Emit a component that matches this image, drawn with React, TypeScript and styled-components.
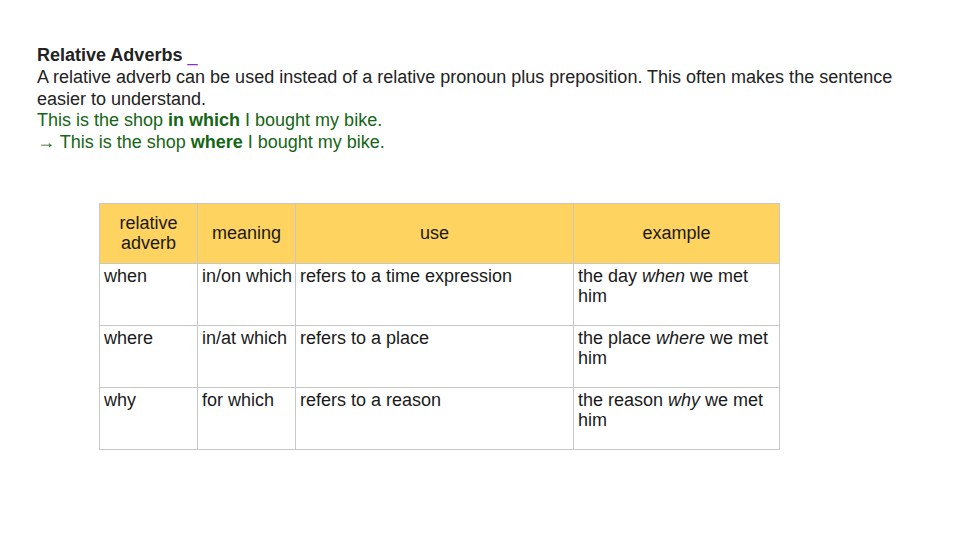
import React from "react";
import styled, { createGlobalStyle } from "styled-components";

const Global = createGlobalStyle`
  html, body { margin: 0; padding: 0; background: #ffffff; }
  body { font-family: "Liberation Sans", Arial, sans-serif; }
`;

const Page = styled.div`
  width: 960px;
  height: 540px;
  box-sizing: border-box;
  padding: 45px 37px 0 37px;
  display: flex;
  flex-direction: column;
  background: #fff;
`;

const Text = styled.div`
  font-size: 18px;
  line-height: 21.8px;
  color: #222;
  width: 880px;
`;

const Title = styled.span`
  font-weight: bold;
  color: #222;
`;

const Mark = styled.span`
  color: #8a2be2;
`;

const Green = styled.div`
  color: #156515;
`;

const TableWrap = styled.div`
  margin-top: 49px;
  margin-left: 62px;
`;

const Table = styled.table`
  border-collapse: collapse;
  font-size: 18px;
  color: #1a1a1a;
  table-layout: fixed;
  width: 680px;
`;

const Th = styled.th<{ $w: number }>`
  width: ${(p) => p.$w}px;
  height: 60px;
  background: #ffd35f;
  border: 1px solid #c8c8c8;
  font-weight: normal;
  text-align: center;
  vertical-align: middle;
  line-height: 20px;
  padding: 0 4px;
  box-sizing: border-box;
`;

const Td = styled.td`
  height: 62px;
  border: 1px solid #c8c8c8;
  vertical-align: top;
  text-align: left;
  padding: 2px 1px 0 4px;
  line-height: 20px;
  box-sizing: border-box;
`;

const rows = [
  ["when", "in/on which", "refers to a time expression", "the day ", "when"],
  ["where", "in/at which", "refers to a place", "the place ", "where"],
  ["why", "for which", "refers to a reason", "the reason ", "why"],
];

export default function App() {
  return (
    <>
      <Global />
      <Page>
        <Text>
          <div>
            <Title>Relative Adverbs</Title> <Mark>_</Mark>
          </div>
          <div>
            A relative adverb can be used instead of a relative pronoun plus preposition. This often makes the sentence
            easier to understand.
          </div>
          <Green>
            This is the shop <b>in which</b> I bought my bike.
          </Green>
          <Green>
            → This is the shop <b>where</b> I bought my bike.
          </Green>
        </Text>
        <TableWrap>
          <Table>
            <thead>
              <tr>
                <Th $w={98}>
                  relative
                  <br />
                  adverb
                </Th>
                <Th $w={98}>meaning</Th>
                <Th $w={278}>use</Th>
                <Th $w={206}>example</Th>
              </tr>
            </thead>
            <tbody>
              {rows.map((r) => (
                <tr key={r[0]}>
                  <Td>{r[0]}</Td>
                  <Td>{r[1]}</Td>
                  <Td>{r[2]}</Td>
                  <Td>
                    {r[3]}
                    <i>{r[4]}</i> we met him
                  </Td>
                </tr>
              ))}
            </tbody>
          </Table>
        </TableWrap>
      </Page>
    </>
  );
}
